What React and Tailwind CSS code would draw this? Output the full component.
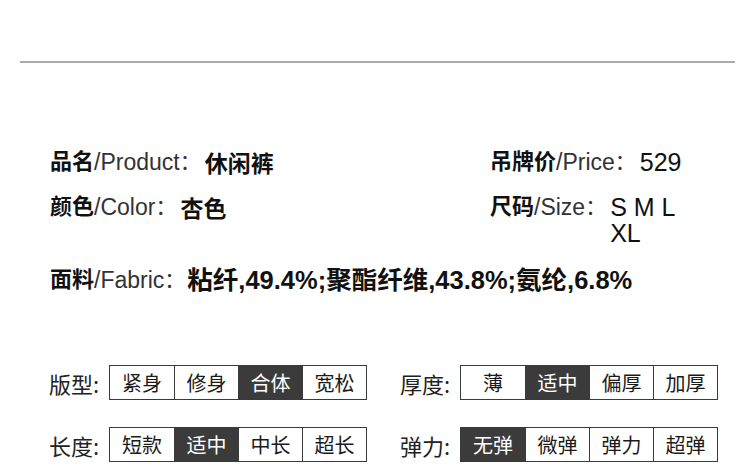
const FONT = "font-['Liberation_Sans','Noto_Sans_CJK_SC',sans-serif]"
const CJK = "font-['Noto_Sans_CJK_SC',sans-serif]"

function InfoItem({ zh, en, children, valueClass = '' }) {
  return (
    <div className="flex items-start leading-[26px]">
      <span className="text-[22px] font-bold text-[#111]">{zh}</span>
      <span className="text-[23px] text-[#333]">/{en}</span>
      <span className="pr-[2px] text-[21px] text-[#333]">：</span>
      <span className={`text-[#111] ${valueClass}`}>{children}</span>
    </div>
  )
}

function OptionBar({ label, options, active }) {
  return (
    <div className={`flex items-center ${CJK}`}>
      <span className="w-[60px] text-[22px] leading-none text-[#222]">{label}:</span>
      <div className="flex border-[1.5px] border-[#3a3a3a]">
        {options.map((opt, i) => (
          <div
            key={opt}
            className={`flex h-[33px] w-[64px] items-center justify-center text-[20px] leading-none ${
              i > 0 ? 'border-l border-[#3a3a3a]' : ''
            } ${i === active ? 'bg-[#3b3b3b] text-white' : 'bg-white text-[#1a1a1a]'}`}
          >
            {opt}
          </div>
        ))}
      </div>
    </div>
  )
}

export default function App() {
  return (
    <div className={`h-[471px] w-[750px] overflow-hidden bg-white ${FONT}`}>
      <div className="px-[20px] pt-[61px] pr-[15px]">
        <div className="h-[2px] bg-[#ababab]" />
      </div>

      <div className="mt-[86px] flex">
        <div className="ml-[50px] flex w-[440px] flex-col gap-[19px]">
          <InfoItem zh="品名" en="Product" valueClass={`pl-[2px] text-[23px] font-bold ${CJK}`}>休闲裤</InfoItem>
          <InfoItem zh="颜色" en="Color" valueClass={`pl-[2px] text-[23px] font-bold ${CJK}`}>杏色</InfoItem>
        </div>
        <div className="flex flex-col gap-[19px]">
          <InfoItem zh="吊牌价" en="Price" valueClass="pl-[2px] text-[25px]">529</InfoItem>
          <InfoItem zh="尺码" en="Size" valueClass="inline-block w-[80px] pl-[2px] text-[25px]">S M L XL</InfoItem>
        </div>
      </div>

      <div className="ml-[50px] mt-[21px]">
        <InfoItem zh="面料" en="Fabric" valueClass="text-[25.5px] font-bold">粘纤,49.4%;聚酯纤维,43.8%;氨纶,6.8%</InfoItem>
      </div>

      <div className="mt-[72px] flex flex-col gap-[27px]">
        <div className="flex">
          <div className="ml-[49px] w-[351px]">
            <OptionBar label="版型" options={['紧身', '修身', '合体', '宽松']} active={2} />
          </div>
          <OptionBar label="厚度" options={['薄', '适中', '偏厚', '加厚']} active={1} />
        </div>
        <div className="flex">
          <div className="ml-[49px] w-[351px]">
            <OptionBar label="长度" options={['短款', '适中', '中长', '超长']} active={1} />
          </div>
          <OptionBar label="弹力" options={['无弹', '微弹', '弹力', '超弹']} active={0} />
        </div>
      </div>
    </div>
  )
}
